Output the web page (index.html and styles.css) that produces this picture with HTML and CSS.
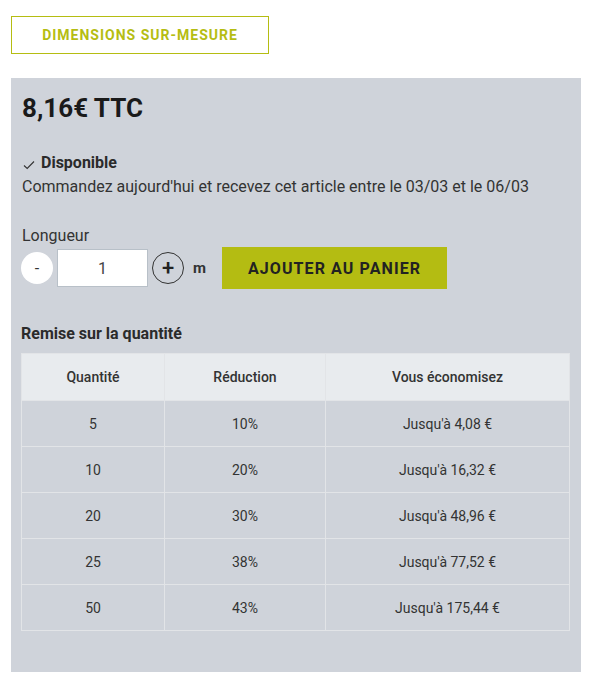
FILE: index.html
```html
<!DOCTYPE html>
<html lang="fr">
<head>
<meta charset="utf-8">
<link rel="stylesheet" href="styles.css">
</head>
<body>
<div class="page">
  <button class="outline-btn">DIMENSIONS SUR-MESURE</button>
  <div class="panel">
    <div class="price">8,16€ TTC</div>
    <div class="stock">
      <svg class="check" width="12" height="10" viewBox="0 0 12 10"><path d="M1 5.5 L4.2 8.5 L11 1.5" fill="none" stroke="#333" stroke-width="1.1"/></svg>
      <span>Disponible</span>
    </div>
    <div class="delivery">Commandez aujourd'hui et recevez cet article entre le 03/03 et le 06/03</div>
    <div class="label">Longueur</div>
    <div class="qty-row">
      <span class="circle minus">-</span>
      <span class="input">1</span>
      <span class="circle plus">+</span>
      <span class="unit">m</span>
      <button class="cart-btn">AJOUTER AU PANIER</button>
    </div>
    <div class="discount-title">Remise sur la quantité</div>
    <table class="discounts">
      <thead>
        <tr><th class="c1">Quantité</th><th class="c2">Réduction</th><th>Vous économisez</th></tr>
      </thead>
      <tbody>
        <tr><td>5</td><td>10%</td><td>Jusqu'à 4,08 €</td></tr>
        <tr><td>10</td><td>20%</td><td>Jusqu'à 16,32 €</td></tr>
        <tr><td>20</td><td>30%</td><td>Jusqu'à 48,96 €</td></tr>
        <tr><td>25</td><td>38%</td><td>Jusqu'à 77,52 €</td></tr>
        <tr><td>50</td><td>43%</td><td>Jusqu'à 175,44 €</td></tr>
      </tbody>
    </table>
  </div>
</div>
</body>
</html>
```
FILE: styles.css
```css
* { box-sizing: border-box; }
body {
  margin: 0;
  background: #fff;
  font-family: Roboto, "Liberation Sans", sans-serif;
  color: #333;
}
.page {
  padding: 16px 12px 0 11px;
}
.outline-btn {
  display: block;
  width: 258px;
  height: 38px;
  background: #fff;
  border: 1px solid #b5bd12;
  color: #b5bd12;
  font-family: Roboto, sans-serif;
  font-weight: 700;
  font-size: 14px;
  letter-spacing: 1px;
  padding: 0;
  margin: 0 0 24px 0;
}
.panel {
  background: #cfd3da;
  width: 570px;
  height: 594px;
  padding: 15px 11px 0 10px;
}
.price {
  font-size: 26px;
  font-weight: 700;
  color: #1a1a1a;
  line-height: 30px;
  margin-left: 1px;
}
.stock {
  display: flex;
  align-items: center;
  gap: 6px;
  margin-top: 29px;
  margin-left: 2px;
  font-size: 16px;
  font-weight: 700;
  color: #2b2b2b;
  line-height: 22px;
}
.check { margin-top: 3px; }
.delivery {
  font-size: 16px;
  line-height: 24px;
  color: #333;
  margin-left: 1px;
  margin-top: 1px;
}
.label {
  margin-top: 25px;
  font-size: 16px;
  line-height: 24px;
  color: #333;
  margin-left: 1px;
}
.qty-row {
  display: flex;
  align-items: center;
  height: 42px;
  margin-top: -1px;
}
.circle {
  width: 32px;
  height: 32px;
  border-radius: 50%;
  display: flex;
  align-items: center;
  justify-content: center;
  font-size: 20px;
  color: #333;
}
.minus {
  background: #fff;
  font-size: 16px;
}
.input {
  width: 91px;
  height: 38px;
  margin-left: 4px;
  background: #fff;
  border: 1px solid #b8c0c8;
  display: flex;
  align-items: center;
  justify-content: center;
  font-size: 16px;
  color: #444;
}
.plus {
  margin-left: 4px;
  border: 1px solid #333;
  font-size: 22px;
  font-weight: 500;
  color: #222;
  padding-bottom: 2px;
}
.unit {
  margin-left: 9px;
  font-size: 15px;
  font-weight: 700;
  color: #333;
}
.cart-btn {
  margin-left: 16px;
  width: 225px;
  height: 42px;
  background: #b4bc12;
  border: 0;
  font-family: Roboto, sans-serif;
  font-weight: 700;
  font-size: 16px;
  letter-spacing: 1.1px;
  color: #222;
  padding: 0;
}
.discount-title {
  margin-top: 34px;
  font-size: 16px;
  font-weight: 700;
  color: #2b2b2b;
  line-height: 22px;
}
.discounts {
  margin-top: 8px;
  width: 549px;
  border-collapse: collapse;
  font-size: 14px;
  color: #333;
}
.discounts th, .discounts td {
  border: 1px solid #e2e4e7;
  text-align: center;
  padding: 0;
}
.discounts th {
  background: #e8ebee;
  height: 47px;
  font-weight: 500;
}
.discounts td {
  height: 46px;
}
.c1 { width: 143px; }
.c2 { width: 161px; }
```
